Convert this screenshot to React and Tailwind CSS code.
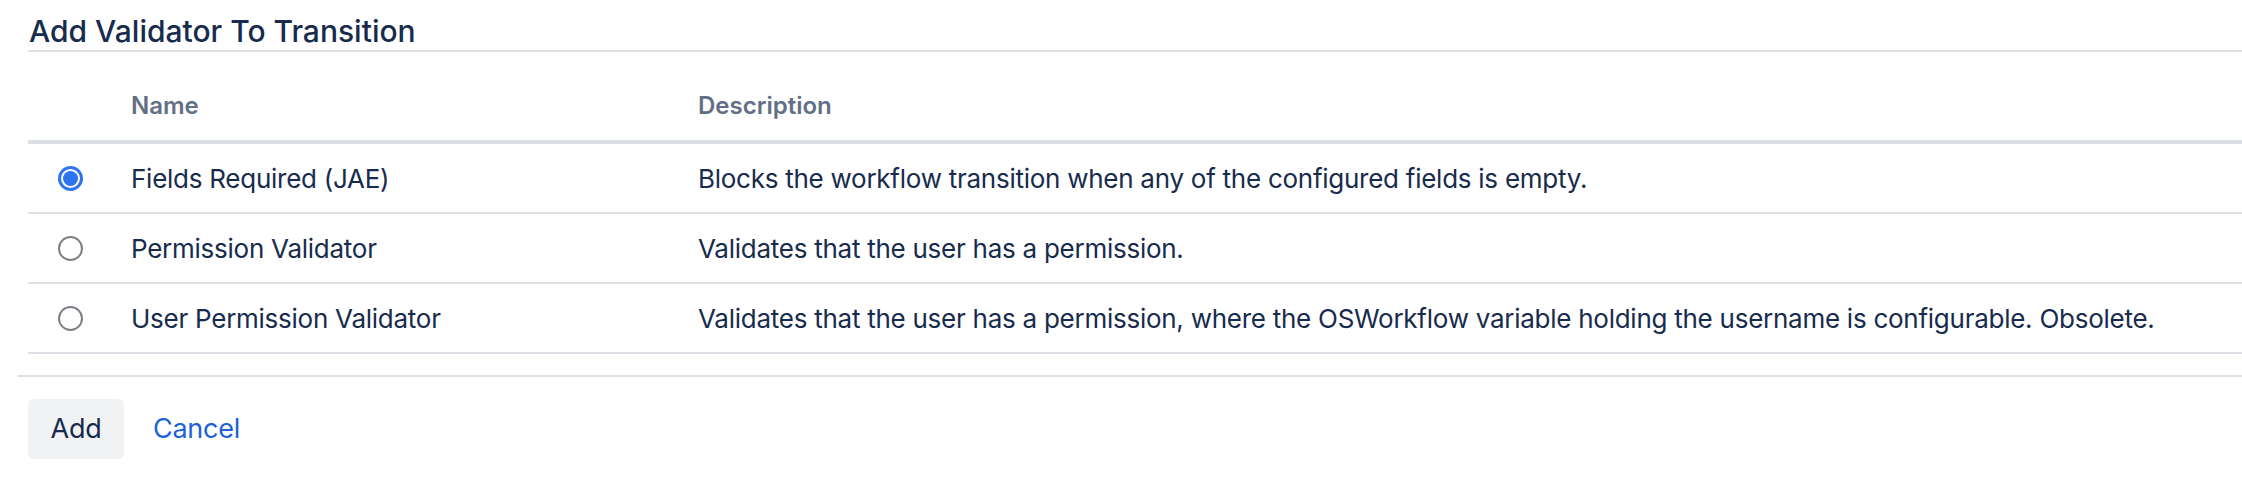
import React from "react";

const rows = [
  {
    name: "Fields Required (JAE)",
    desc: "Blocks the workflow transition when any of the configured fields is empty.",
    checked: true,
  },
  {
    name: "Permission Validator",
    desc: "Validates that the user has a permission.",
    checked: false,
  },
  {
    name: "User Permission Validator",
    desc: "Validates that the user has a permission, where the OSWorkflow variable holding the username is configurable. Obsolete.",
    checked: false,
  },
];

function Radio({ checked }) {
  if (checked) {
    return (
      <div className="w-[25px] h-[25px] rounded-full border-[3px] border-[#2f73f0] bg-white flex items-center justify-center">
        <div className="w-[15px] h-[15px] rounded-full bg-[#2f73f0]" />
      </div>
    );
  }
  return <div className="w-[25px] h-[25px] rounded-full border-2 border-[#7d7f85] bg-white" />;
}

export default function App() {
  return (
    <div
      className="w-[2242px] h-[488px] bg-white text-[#172b4d] pl-[18px] overflow-hidden"
      style={{ fontFamily: "Inter, 'Noto Sans', 'Liberation Sans', sans-serif" }}
    >
      <div className="ml-[10px] h-[52px] border-b-2 border-[#dcdfe4]">
        <h2 className="pt-[13px] pl-[1px] text-[30px] leading-[36px] font-medium tracking-[0em] text-[#172b4d]">
          Add Validator To Transition
        </h2>
      </div>

      <div className="ml-[10px]">
        <div className="grid grid-cols-[85px_567px_1fr] h-[92px] border-b-4 border-[#dcdfe4] items-end pb-[19px] text-[24px] leading-[30px] font-semibold text-[#626f86]">
          <div />
          <div className="pl-[18px]">Name</div>
          <div className="pl-[18px]">Description</div>
        </div>
        {rows.map((r) => (
          <div
            key={r.name}
            className="grid grid-cols-[85px_567px_1fr] h-[70px] border-b-2 border-[#dcdfe4] items-center text-[26px] tracking-[-0.01em]"
          >
            <div className="flex justify-center pt-[1px]">
              <Radio checked={r.checked} />
            </div>
            <div className="pl-[18px] whitespace-nowrap">{r.name}</div>
            <div className="pl-[18px] whitespace-nowrap">{r.desc}</div>
          </div>
        ))}
      </div>

      <div className="mt-[21px] border-t-2 border-[#dcdfe4]">
        <div className="ml-[10px] mt-[22px] flex items-center gap-[29px]">
          <button className="w-[96px] h-[60px] rounded-[6px] bg-[#f1f2f4] text-[27px] text-[#172b4d] tracking-[-0.01em]">
            Add
          </button>
          <a className="text-[27px] text-[#1d62d9] tracking-[-0.01em] cursor-pointer">Cancel</a>
        </div>
      </div>
    </div>
  );
}
